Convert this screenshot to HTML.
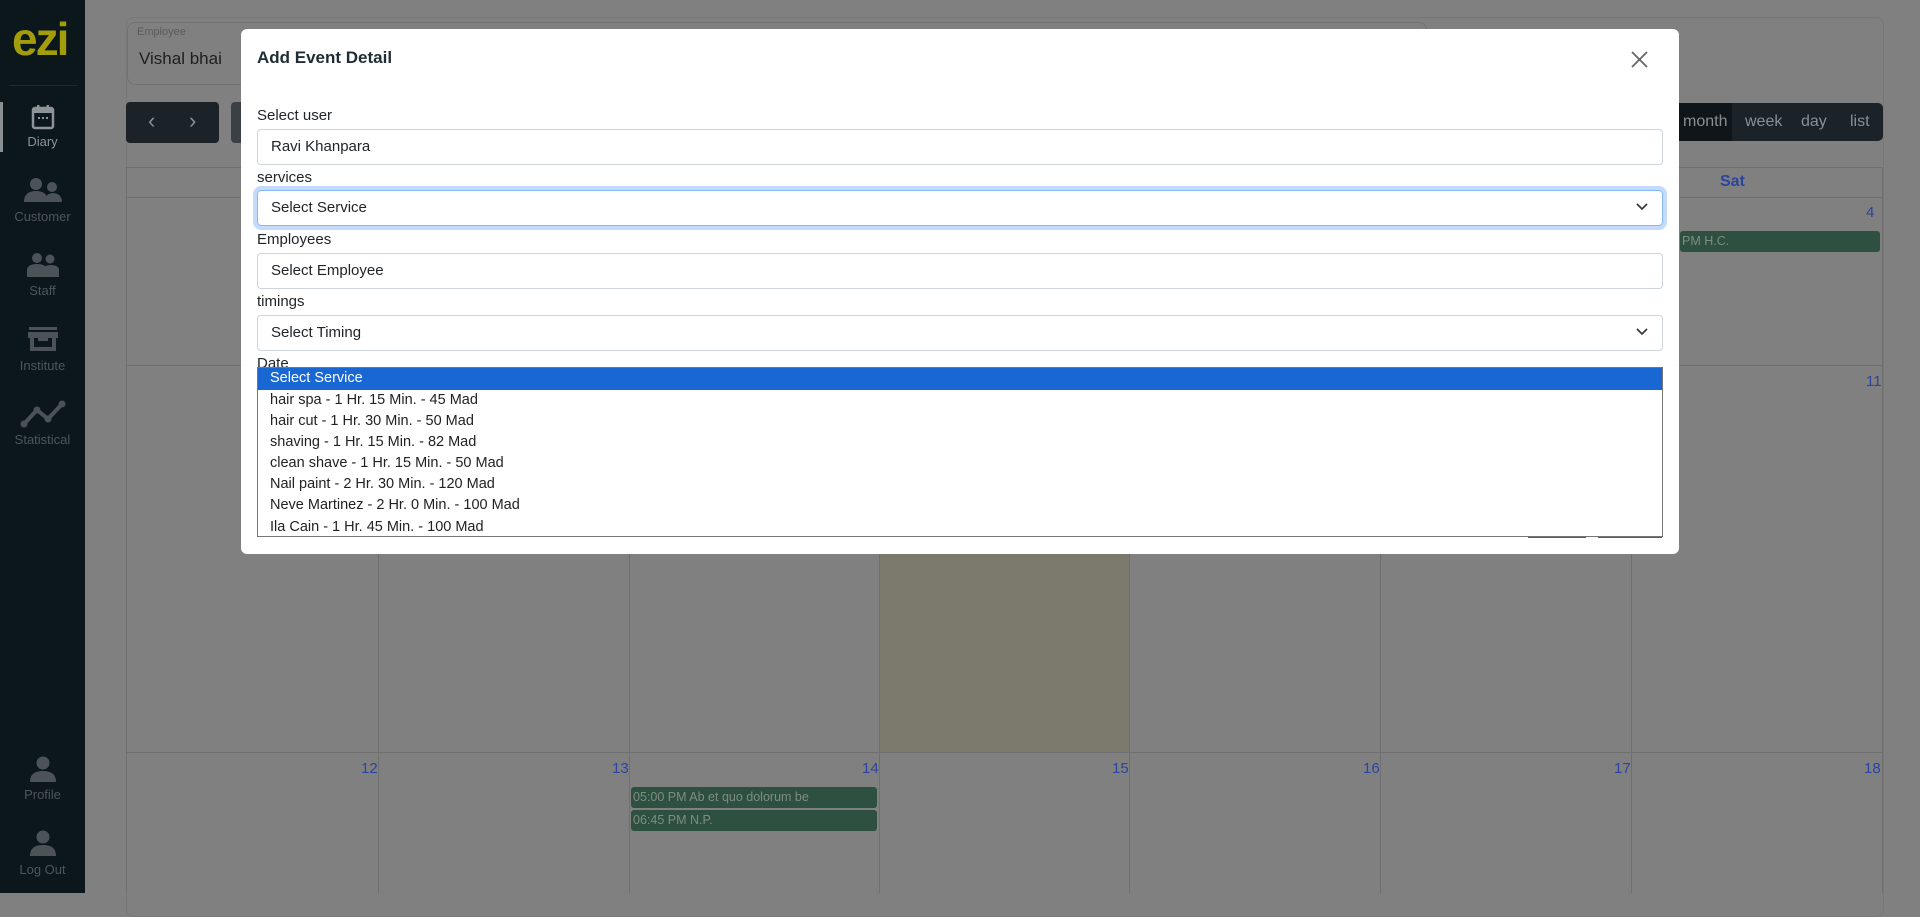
<!DOCTYPE html>
<html><head><meta charset="utf-8"><style>
*{box-sizing:border-box;margin:0;padding:0}
body{width:1920px;height:893px;overflow:hidden;background:#808080;font-family:"Liberation Sans",sans-serif;position:relative}
.abs{position:absolute}
.sb{left:0;top:0;width:85px;height:893px;background:#0c171c}
.si{position:absolute;left:0;width:85px;text-align:center;font-size:12px;color:#4d5559}
.ev{position:absolute;height:21px;background:#2e5040;border-radius:3px;color:#7e8d80;font-size:12.5px;line-height:21px;padding-left:2px;white-space:nowrap;overflow:hidden}
.modal{left:241px;top:29px;width:1438px;height:525px;background:#fff;border-radius:6px}
.lbl{position:absolute;left:16px;font-size:15px;color:#212529}
.inp{position:absolute;left:16px;width:1406px;height:36px;border:1px solid #ced4da;border-radius:4px;font-size:15px;color:#212529;padding-left:13px;line-height:34px}
.chev{position:absolute;right:14px;top:12px}
.dd{position:absolute;left:16px;top:338px;width:1406px;height:170px;border:1px solid #767676;background:#fff;font-size:14.5px;color:#222}
.dd div{height:21.1px;line-height:21px;padding-left:12px}
</style></head><body>
<div class="abs sb">
 <div class="abs" style="left:12px;top:14px;font-size:46px;font-weight:bold;color:#a39c0b;letter-spacing:-2px;line-height:50px">ezi</div>
 <div class="abs" style="left:9px;top:85px;width:68px;height:1px;background:#1f2a2f"></div>
 <div class="abs" style="left:0;top:102px;width:3px;height:50px;background:#8a8f92"></div>
 <svg class="abs" style="left:31px;top:104px" width="24" height="26" viewBox="0 0 24 26"><rect x="2" y="4" width="20" height="20" rx="2" fill="none" stroke="#8e9396" stroke-width="2.5"/><rect x="2" y="4" width="20" height="5" fill="#8e9396"/><rect x="6" y="1" width="2.5" height="5" fill="#8e9396"/><rect x="15.5" y="1" width="2.5" height="5" fill="#8e9396"/><rect x="7" y="13" width="2" height="2" fill="#8e9396"/><rect x="11" y="13" width="2" height="2" fill="#8e9396"/><rect x="15" y="13" width="2" height="2" fill="#8e9396"/></svg>
 <div class="si" style="top:134px;color:#8e9396;font-size:13px">Diary</div>
 <svg class="abs" style="left:23px;top:177px" width="40" height="26" viewBox="0 0 40 26"><circle cx="13" cy="7" r="6" fill="#4b5357"/><path d="M1 25c0-8 5-11 12-11s12 3 12 11z" fill="#4b5357"/><circle cx="29" cy="10" r="5" fill="#4b5357"/><path d="M22 25c0-6 3-9 8-9s9 3 9 9z" fill="#4b5357"/></svg>
 <div class="si" style="top:209px;font-size:13px">Customer</div>
 <svg class="abs" style="left:26px;top:252px" width="34" height="26" viewBox="0 0 34 26"><circle cx="11" cy="6" r="5" fill="#4b5357"/><circle cx="24" cy="7" r="4.5" fill="#4b5357"/><path d="M1 25v-7c0-4 4-6 10-6s10 2 10 6v7z" fill="#4b5357"/><path d="M17 25v-7c0-3 3-5 8-5s8 2 8 5v7z" fill="#4b5357"/></svg>
 <div class="si" style="top:283px;font-size:13px">Staff</div>
 <svg class="abs" style="left:28px;top:326px" width="30" height="26" viewBox="0 0 30 26"><rect x="1" y="1" width="28" height="3" fill="#4b5357"/><path d="M0 6h30v6H0z" fill="#4b5357"/><rect x="2" y="12" width="4" height="13" fill="#4b5357"/><rect x="24" y="12" width="4" height="13" fill="#4b5357"/><rect x="2" y="21" width="26" height="4" fill="#4b5357"/><rect x="10" y="12" width="10" height="3" fill="#4b5357"/></svg>
 <div class="si" style="top:358px;font-size:13px">Institute</div>
 <svg class="abs" style="left:20px;top:400px" width="46" height="28" viewBox="0 0 46 28"><path d="M4 24L17 10L28 19L42 4" fill="none" stroke="#4b5357" stroke-width="4"/><circle cx="4" cy="24" r="3.5" fill="#4b5357"/><circle cx="17" cy="10" r="3.5" fill="#4b5357"/><circle cx="28" cy="19" r="3.5" fill="#4b5357"/><circle cx="42" cy="4" r="3.5" fill="#4b5357"/></svg>
 <div class="si" style="top:432px;font-size:13px">Statistical</div>
 <svg class="abs" style="left:28px;top:756px" width="30" height="26" viewBox="0 0 30 26"><circle cx="15" cy="7" r="6.5" fill="#4b5357"/><path d="M2 26c0-8 5-11 13-11s13 3 13 11z" fill="#4b5357"/></svg>
 <div class="si" style="top:787px;font-size:13px">Profile</div>
 <svg class="abs" style="left:28px;top:830px" width="30" height="26" viewBox="0 0 30 26"><circle cx="15" cy="7" r="6.5" fill="#4b5357"/><path d="M2 26c0-8 5-11 13-11s13 3 13 11z" fill="#4b5357"/></svg>
 <div class="si" style="top:862px;font-size:13px">Log Out</div>
</div>
<div class="abs" style="left:126px;top:17px;width:1758px;height:900px;border:1px solid #777;border-radius:8px;background:#808080"></div>
<div class="abs" style="left:127px;top:22px;width:1300px;height:63px;border:1px solid #727272;border-radius:8px"></div>
<div class="abs" style="left:134px;top:26px;font-size:11px;color:#5a5a5a;background:#808080;padding:0 3px">Employee</div>
<div class="abs" style="left:139px;top:49px;font-size:17px;color:#1e1e1e">Vishal bhai</div>
<div class="abs" style="left:126px;top:102px;width:93px;height:41px;background:#1b2228;border-radius:4px;color:#8a8f93;font-size:22px;line-height:38px"><span style="position:absolute;left:22px">‹</span><span style="position:absolute;left:63px">›</span></div>
<div class="abs" style="left:231px;top:102px;width:40px;height:41px;background:#3b4046;border-radius:4px"></div>
<div class="abs" style="left:1660px;top:103px;width:223px;height:38px;background:#1b2228;border-radius:0 5px 5px 0;color:#8a8f93;font-size:16px;line-height:38px">
 <div class="abs" style="left:0;top:0;width:72px;height:38px;background:#0f1519"></div>
 <span class="abs" style="left:23px;color:#8a8f93">month</span><span class="abs" style="left:85px">week</span><span class="abs" style="left:141px">day</span><span class="abs" style="left:190px">list</span>
</div>
<div class="abs" style="left:126px;top:167px;width:1757px;height:1px;background:#6f6f6f"></div>
<div class="abs" style="left:1720px;top:173px;font-size:16px;color:#2a44a0;font-weight:bold">Sat</div>
<div class="abs" style="left:126px;top:197px;width:1757px;height:1px;background:#6f6f6f"></div>
<div class="abs" style="left:126px;top:365px;width:1757px;height:1px;background:#6f6f6f"></div>
<div class="abs" style="left:126px;top:752px;width:1757px;height:1px;background:#6f6f6f"></div>
<div class="abs" style="left:879px;top:366px;width:250px;height:386px;background:#7c7a6d"></div>
<div class="abs" style="left:126px;top:167px;width:1px;height:726px;background:#6f6f6f"></div>
<div class="abs" style="left:378px;top:197px;width:1px;height:696px;background:#6f6f6f"></div>
<div class="abs" style="left:629px;top:197px;width:1px;height:696px;background:#6f6f6f"></div>
<div class="abs" style="left:879px;top:197px;width:1px;height:696px;background:#6f6f6f"></div>
<div class="abs" style="left:1129px;top:197px;width:1px;height:696px;background:#6f6f6f"></div>
<div class="abs" style="left:1380px;top:197px;width:1px;height:696px;background:#6f6f6f"></div>
<div class="abs" style="left:1631px;top:197px;width:1px;height:696px;background:#6f6f6f"></div>
<div class="abs" style="left:1882px;top:167px;width:1px;height:726px;background:#6f6f6f"></div>
<div class="abs" style="left:1866px;top:204px;font-size:15px;color:#2a44a0">4</div>
<div class="ev" style="left:1680px;top:231px;width:200px;padding-left:0"><span style="margin-left:2px">PM H.C.</span></div>
<div class="abs" style="left:1866px;top:373px;font-size:15px;color:#2a44a0">11</div>
<div class="abs" style="left:361px;top:760px;font-size:15px;color:#2a44a0">12</div>
<div class="abs" style="left:612px;top:760px;font-size:15px;color:#2a44a0">13</div>
<div class="abs" style="left:862px;top:760px;font-size:15px;color:#2a44a0">14</div>
<div class="abs" style="left:1112px;top:760px;font-size:15px;color:#2a44a0">15</div>
<div class="abs" style="left:1363px;top:760px;font-size:15px;color:#2a44a0">16</div>
<div class="abs" style="left:1614px;top:760px;font-size:15px;color:#2a44a0">17</div>
<div class="abs" style="left:1864px;top:760px;font-size:15px;color:#2a44a0">18</div>
<div class="ev" style="left:631px;top:787px;width:246px">05:00 PM Ab et quo dolorum be</div>
<div class="ev" style="left:631px;top:810px;width:246px">06:45 PM N.P.</div>
<div class="abs modal">
 <div class="abs" style="left:16px;top:19px;font-size:17px;font-weight:bold;color:#1e2d33">Add Event Detail</div>
 <svg class="abs" style="left:1390px;top:22px" width="17" height="17" viewBox="0 0 17 17"><path d="M1 1L16 16M16 1L1 16" stroke="#666" stroke-width="1.8"/></svg>
 <div class="lbl" style="top:78px">Select user</div>
 <div class="inp" style="top:100px">Ravi Khanpara</div>
 <div class="lbl" style="top:140px">services</div>
 <div class="inp" style="top:161px;border-color:#86b7fe;box-shadow:0 0 0 4px #c5dbfc">Select Service<svg class="chev" width="12" height="8" viewBox="0 0 12 8"><path d="M1 1l5 5 5-5" fill="none" stroke="#333" stroke-width="1.6"/></svg></div>
 <div class="lbl" style="top:202px">Employees</div>
 <div class="inp" style="top:224px">Select Employee</div>
 <div class="lbl" style="top:264px">timings</div>
 <div class="inp" style="top:286px">Select Timing<svg class="chev" width="12" height="8" viewBox="0 0 12 8"><path d="M1 1l5 5 5-5" fill="none" stroke="#333" stroke-width="1.6"/></svg></div>
 <div class="lbl" style="top:326px">Date</div>
 <div class="abs" style="left:1287px;top:500px;width:58px;height:9px;background:#1967d2"></div>
 <div class="abs" style="left:1357px;top:500px;width:64px;height:9px;background:#1967d2"></div>
 <div class="dd">
  <div style="background:#1967d2;color:#fff;height:22px">Select Service</div>
  <div>hair spa - 1 Hr. 15 Min. - 45 Mad</div>
  <div>hair cut - 1 Hr. 30 Min. - 50 Mad</div>
  <div>shaving - 1 Hr. 15 Min. - 82 Mad</div>
  <div>clean shave - 1 Hr. 15 Min. - 50 Mad</div>
  <div>Nail paint - 2 Hr. 30 Min. - 120 Mad</div>
  <div>Neve Martinez - 2 Hr. 0 Min. - 100 Mad</div>
  <div>Ila Cain - 1 Hr. 45 Min. - 100 Mad</div>
 </div>
</div>
</body></html>
